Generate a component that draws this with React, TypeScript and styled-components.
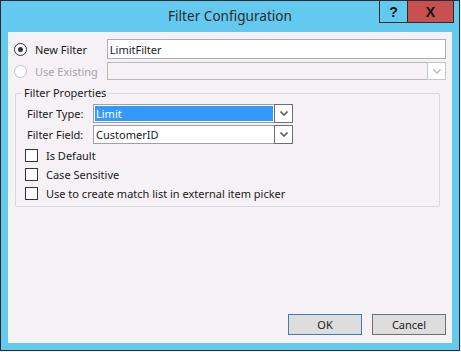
import React from 'react';
import styled, { createGlobalStyle } from 'styled-components';

const GlobalStyle = createGlobalStyle`
  html, body {
    margin: 0;
    padding: 0;
  }
  body {
    background: #eef0f3;
    font-family: 'Noto Sans', 'Open Sans', sans-serif;
    font-size: 11px;
    color: #1a1a1a;
  }
  * {
    box-sizing: border-box;
  }
`;

const Window = styled.div`
  position: relative;
  width: 460px;
  height: 351px;
  border: 1px solid #2b2b2b;
  background: #63c9ef;
  display: flex;
  flex-direction: column;
  padding: 0 7px 7px 7px;
`;

const TitleBar = styled.div`
  height: 31px;
  display: flex;
  align-items: center;
  justify-content: center;
  font-size: 13.6px;
  color: #2b2b2b;
  padding-bottom: 2px;
`;

const CaptionButtons = styled.div`
  position: absolute;
  top: -1px;
  right: 5px;
  display: flex;
`;

const CaptionButton = styled.div<{ $close?: boolean }>`
  width: ${p => (p.$close ? '47px' : '29px')};
  height: 23px;
  border: 1px solid #2b2b2b;
  margin-left: ${p => (p.$close ? '-1px' : '0')};
  background: ${p => (p.$close ? '#c75050' : 'transparent')};
  display: flex;
  align-items: center;
  justify-content: center;
  font-family: 'Liberation Sans', Arial, sans-serif;
  font-weight: bold;
  font-size: 14px;
  color: #111;
`;

const Content = styled.div`
  flex: 1;
  background: #f5f1f5;
  display: flex;
  flex-direction: column;
  padding: 7px 6px 8px 6px;
`;

const Row = styled.div<{ $h: number }>`
  display: flex;
  align-items: center;
  height: ${p => p.$h}px;
  margin-bottom: 3px;
`;

const RadioLabel = styled.label<{ $disabled?: boolean }>`
  width: 93px;
  display: flex;
  align-items: center;
  gap: 8px;
  color: ${p => (p.$disabled ? '#a6a6a6' : '#1a1a1a')};
`;

const RadioCircle = styled.span<{ $checked?: boolean; $disabled?: boolean }>`
  width: 13px;
  height: 13px;
  border-radius: 50%;
  border: 1px solid ${p => (p.$disabled ? '#c4c4c4' : '#333')};
  background: #fff;
  display: flex;
  align-items: center;
  justify-content: center;

  &::after {
    content: '';
    width: 5px;
    height: 5px;
    border-radius: 50%;
    background: ${p => (p.$checked ? '#333' : 'transparent')};
  }
`;

const TextBox = styled.div`
  width: 340px;
  height: 20px;
  border: 1px solid #abadb3;
  background: #fff;
  display: flex;
  align-items: center;
  padding-left: 2px;
`;

const Combo = styled.div<{ $width: number; $disabled?: boolean }>`
  width: ${p => p.$width}px;
  height: 100%;
  border: 1px solid ${p => (p.$disabled ? '#b9b9b9' : '#a0a0a0')};
  background: ${p => (p.$disabled ? '#f5f1f5' : '#fff')};
  display: flex;
  padding: 1px;
`;

const ComboText = styled.div<{ $selected?: boolean }>`
  flex: 1;
  display: flex;
  align-items: center;
  padding-left: 1px;
  margin-right: 1px;
  background: ${p => (p.$selected ? '#3399ff' : 'transparent')};
  color: ${p => (p.$selected ? '#fff' : '#1a1a1a')};
`;

const DropButton = styled.div<{ $disabled?: boolean }>`
  width: 19px;
  margin: -2px -2px -2px 0;
  border: 1px solid ${p => (p.$disabled ? '#c6c6c6' : '#707070')};
  background: #fff;
  display: flex;
  align-items: center;
  justify-content: center;
  color: ${p => (p.$disabled ? '#c0c0c0' : '#606060')};
`;

const GroupBox = styled.fieldset`
  margin: 2px 6px 0 1px;
  padding: 0;
  border: 1px solid #d5dbe0;
  border-radius: 2px;
  min-width: 0;
`;

const Legend = styled.legend`
  margin-left: 6px;
  padding: 0 2px;
  line-height: 16px;
  color: #1a1a1a;
`;

const GroupBody = styled.div`
  padding: 3px 0 3px 11px;
  display: flex;
  flex-direction: column;
`;

const FieldRow = styled.div`
  display: flex;
  align-items: center;
  height: 19px;
  margin-bottom: 2px;
`;

const FieldLabel = styled.span`
  width: 66px;
`;

const CheckRow = styled.label`
  display: flex;
  align-items: center;
  height: 19px;
  gap: 8px;
  margin-left: -2px;
`;

const CheckBox = styled.span`
  width: 13px;
  height: 13px;
  border: 1px solid #333;
  background: #fff;
`;

const ButtonBar = styled.div`
  margin-top: auto;
  display: flex;
  justify-content: flex-end;
  gap: 10px;
`;

const Button = styled.button<{ $default?: boolean }>`
  width: 74px;
  height: 21px;
  border: 1px solid ${p => (p.$default ? '#3c7fb1' : '#707070')};
  background: #dddddd;
  font-family: inherit;
  font-size: 11px;
  color: #1a1a1a;
  padding: 0;
`;

const Chevron: React.FC = () => (
  <svg width="8" height="5" viewBox="0 0 8 5">
    <path d="M0.5 0.5 L4 4 L7.5 0.5" fill="none" stroke="currentColor" strokeWidth="1.6" />
  </svg>
);

const App: React.FC = () => (
  <>
    <GlobalStyle />
    <Window>
      <TitleBar>Filter Configuration</TitleBar>
      <CaptionButtons>
        <CaptionButton>?</CaptionButton>
        <CaptionButton $close>X</CaptionButton>
      </CaptionButtons>
      <Content>
        <Row $h={20}>
          <RadioLabel>
            <RadioCircle $checked />
            New Filter
          </RadioLabel>
          <TextBox>LimitFilter</TextBox>
        </Row>
        <Row $h={18}>
          <RadioLabel $disabled>
            <RadioCircle $disabled />
            Use Existing
          </RadioLabel>
          <Combo $width={340} $disabled>
            <ComboText />
            <DropButton $disabled>
              <Chevron />
            </DropButton>
          </Combo>
        </Row>
        <GroupBox>
          <Legend>Filter Properties</Legend>
          <GroupBody>
            <FieldRow>
              <FieldLabel>Filter Type:</FieldLabel>
              <Combo $width={200}>
                <ComboText $selected>Limit</ComboText>
                <DropButton>
                  <Chevron />
                </DropButton>
              </Combo>
            </FieldRow>
            <FieldRow>
              <FieldLabel>Filter Field:</FieldLabel>
              <Combo $width={200}>
                <ComboText>CustomerID</ComboText>
                <DropButton>
                  <Chevron />
                </DropButton>
              </Combo>
            </FieldRow>
            <CheckRow>
              <CheckBox />
              Is Default
            </CheckRow>
            <CheckRow>
              <CheckBox />
              Case Sensitive
            </CheckRow>
            <CheckRow>
              <CheckBox />
              Use to create match list in external item picker
            </CheckRow>
          </GroupBody>
        </GroupBox>
        <ButtonBar>
          <Button $default>OK</Button>
          <Button>Cancel</Button>
        </ButtonBar>
      </Content>
    </Window>
  </>
);

export default App;
